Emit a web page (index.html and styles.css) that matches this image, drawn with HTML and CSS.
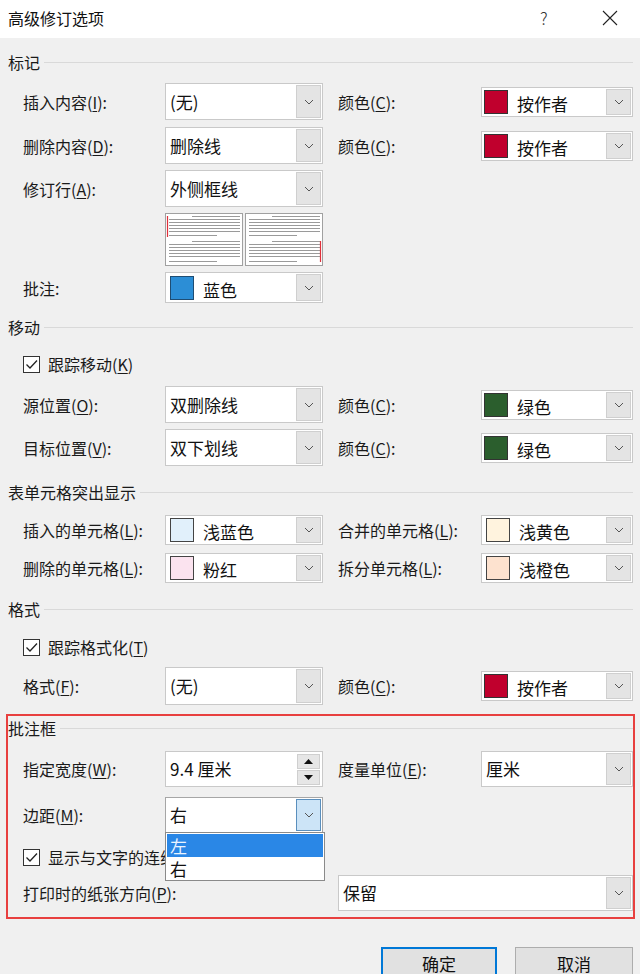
FILE: index.html
```html
<!DOCTYPE html>
<html lang="zh-CN">
<head>
<meta charset="utf-8">
<title>高级修订选项</title>
<link rel="stylesheet" href="styles.css">
</head>
<body>
<div class="dialog">
  <header class="titlebar">
    <span class="title">高级修订选项</span>
    <span class="help">?</span>
    <span class="close">
      <svg width="16" height="16" viewBox="0 0 16 16"><path d="M1 1 L15 15 M15 1 L1 15" stroke="#222" stroke-width="1.1" fill="none"/></svg>
    </span>
  </header>

  <main class="content">
    <!-- 标记 -->
    <section class="group g-mark">
      <div class="group-title"><span>标记</span><i class="rule"></i></div>
      <div class="row h37 mt9">
        <span class="lbl">插入内容(<u>I</u>):</span>
        <div class="combo"><span class="val">(无)</span><span class="btn"><svg width="10" height="6" viewBox="0 0 10 6"><path d="M1 1 L5 5 L9 1" stroke="#555" stroke-width="1" fill="none"/></svg></span></div>
        <span class="lbl">颜色(<u>C</u>):</span>
        <div class="combo c30"><span class="sw red"></span><span class="val">按作者</span><span class="btn"><svg width="10" height="6" viewBox="0 0 10 6"><path d="M1 1 L5 5 L9 1" stroke="#555" stroke-width="1" fill="none"/></svg></span></div>
      </div>
      <div class="row h37 mt7">
        <span class="lbl">删除内容(<u>D</u>):</span>
        <div class="combo"><span class="val">删除线</span><span class="btn"><svg width="10" height="6" viewBox="0 0 10 6"><path d="M1 1 L5 5 L9 1" stroke="#555" stroke-width="1" fill="none"/></svg></span></div>
        <span class="lbl">颜色(<u>C</u>):</span>
        <div class="combo c30"><span class="sw red"></span><span class="val">按作者</span><span class="btn"><svg width="10" height="6" viewBox="0 0 10 6"><path d="M1 1 L5 5 L9 1" stroke="#555" stroke-width="1" fill="none"/></svg></span></div>
      </div>
      <div class="row h37 mt6">
        <span class="lbl">修订行(<u>A</u>):</span>
        <div class="combo"><span class="val">外侧框线</span><span class="btn"><svg width="10" height="6" viewBox="0 0 10 6"><path d="M1 1 L5 5 L9 1" stroke="#555" stroke-width="1" fill="none"/></svg></span></div>
      </div>
      <div class="row h53 mt6">
        <span class="lbl"></span>
        <div class="preview">
          <svg width="158" height="53" viewBox="0 0 158 53">
            <rect x="0.5" y="0.5" width="77" height="52" fill="#fff" stroke="#a0a0a0"/>
            <rect x="80.5" y="0.5" width="77" height="52" fill="#fff" stroke="#a0a0a0"/>
            <g stroke="#9a9a9a" stroke-width="1">
              <path d="M27 3.5 H75 M4 6.5 H75 M4 9.5 H75 M4 12.5 H75 M4 15.5 H75 M4 18.5 H75 M4 22.5 H52"/>
              <path d="M27 28.5 H75 M4 31.5 H75 M4 34.5 H75 M4 37.5 H75 M4 40.5 H75 M4 43.5 H75 M4 48.5 H52"/>
              <path d="M107 3.5 H155 M84 6.5 H155 M84 9.5 H155 M84 12.5 H155 M84 15.5 H155 M84 18.5 H155 M84 22.5 H132"/>
              <path d="M107 28.5 H155 M84 31.5 H155 M84 34.5 H155 M84 37.5 H155 M84 40.5 H155 M84 43.5 H155 M84 48.5 H132"/>
            </g>
            <path d="M2.5 3 V24" stroke="#e0303a" stroke-width="1.2"/>
            <path d="M155.5 28 V49" stroke="#e0303a" stroke-width="1.2"/>
          </svg>
        </div>
      </div>
      <div class="row h31 mt6">
        <span class="lbl">批注:</span>
        <div class="combo"><span class="sw blue"></span><span class="val">蓝色</span><span class="btn"><svg width="10" height="6" viewBox="0 0 10 6"><path d="M1 1 L5 5 L9 1" stroke="#555" stroke-width="1" fill="none"/></svg></span></div>
      </div>
    </section>

    <!-- 移动 -->
    <section class="group g-move">
      <div class="group-title"><span>移动</span><i class="rule"></i></div>
      <div class="check-row mt13">
        <span class="cb"><svg width="13" height="11" viewBox="0 0 13 11"><path d="M1.5 5.5 L5 9 L12 1.5" stroke="#222" stroke-width="1.3" fill="none"/></svg></span>
        <span class="cb-text">跟踪移动(<u>K</u>)</span>
      </div>
      <div class="row h37 mt10">
        <span class="lbl">源位置(<u>O</u>):</span>
        <div class="combo"><span class="val">双删除线</span><span class="btn"><svg width="10" height="6" viewBox="0 0 10 6"><path d="M1 1 L5 5 L9 1" stroke="#555" stroke-width="1" fill="none"/></svg></span></div>
        <span class="lbl">颜色(<u>C</u>):</span>
        <div class="combo c30"><span class="sw green"></span><span class="val">绿色</span><span class="btn"><svg width="10" height="6" viewBox="0 0 10 6"><path d="M1 1 L5 5 L9 1" stroke="#555" stroke-width="1" fill="none"/></svg></span></div>
      </div>
      <div class="row h37 mt6">
        <span class="lbl">目标位置(<u>V</u>):</span>
        <div class="combo"><span class="val">双下划线</span><span class="btn"><svg width="10" height="6" viewBox="0 0 10 6"><path d="M1 1 L5 5 L9 1" stroke="#555" stroke-width="1" fill="none"/></svg></span></div>
        <span class="lbl">颜色(<u>C</u>):</span>
        <div class="combo c30"><span class="sw green"></span><span class="val">绿色</span><span class="btn"><svg width="10" height="6" viewBox="0 0 10 6"><path d="M1 1 L5 5 L9 1" stroke="#555" stroke-width="1" fill="none"/></svg></span></div>
      </div>
    </section>

    <!-- 表单元格突出显示 -->
    <section class="group g-table">
      <div class="group-title"><span>表单元格突出显示</span><i class="rule"></i></div>
      <div class="row h30 mt11">
        <span class="lbl">插入的单元格(<u>L</u>):</span>
        <div class="combo"><span class="sw ltblue"></span><span class="val">浅蓝色</span><span class="btn"><svg width="10" height="6" viewBox="0 0 10 6"><path d="M1 1 L5 5 L9 1" stroke="#555" stroke-width="1" fill="none"/></svg></span></div>
        <span class="lbl">合并的单元格(<u>L</u>):</span>
        <div class="combo"><span class="sw ltyellow"></span><span class="val">浅黄色</span><span class="btn"><svg width="10" height="6" viewBox="0 0 10 6"><path d="M1 1 L5 5 L9 1" stroke="#555" stroke-width="1" fill="none"/></svg></span></div>
      </div>
      <div class="row h30 mt8">
        <span class="lbl">删除的单元格(<u>L</u>):</span>
        <div class="combo"><span class="sw pink"></span><span class="val">粉红</span><span class="btn"><svg width="10" height="6" viewBox="0 0 10 6"><path d="M1 1 L5 5 L9 1" stroke="#555" stroke-width="1" fill="none"/></svg></span></div>
        <span class="lbl">拆分单元格(<u>L</u>):</span>
        <div class="combo"><span class="sw ltorange"></span><span class="val">浅橙色</span><span class="btn"><svg width="10" height="6" viewBox="0 0 10 6"><path d="M1 1 L5 5 L9 1" stroke="#555" stroke-width="1" fill="none"/></svg></span></div>
      </div>
    </section>

    <!-- 格式 -->
    <section class="group g-format">
      <div class="group-title"><span>格式</span><i class="rule"></i></div>
      <div class="check-row mt14">
        <span class="cb"><svg width="13" height="11" viewBox="0 0 13 11"><path d="M1.5 5.5 L5 9 L12 1.5" stroke="#222" stroke-width="1.3" fill="none"/></svg></span>
        <span class="cb-text">跟踪格式化(<u>T</u>)</span>
      </div>
      <div class="row h38 mt8">
        <span class="lbl">格式(<u>F</u>):</span>
        <div class="combo"><span class="val">(无)</span><span class="btn"><svg width="10" height="6" viewBox="0 0 10 6"><path d="M1 1 L5 5 L9 1" stroke="#555" stroke-width="1" fill="none"/></svg></span></div>
        <span class="lbl">颜色(<u>C</u>):</span>
        <div class="combo c30"><span class="sw red"></span><span class="val">按作者</span><span class="btn"><svg width="10" height="6" viewBox="0 0 10 6"><path d="M1 1 L5 5 L9 1" stroke="#555" stroke-width="1" fill="none"/></svg></span></div>
      </div>
    </section>

    <!-- 批注框 -->
    <section class="group g-balloon">
      <div class="group-title"><span>批注框</span><i class="rule"></i></div>
      <div class="row h36 mt11">
        <span class="lbl">指定宽度(<u>W</u>):</span>
        <div class="combo spin"><span class="val">9.4 厘米</span>
          <span class="spin-btns">
            <span class="sbtn"><svg width="9" height="5" viewBox="0 0 9 5"><path d="M0 5 L4.5 0 L9 5 Z" fill="#111"/></svg></span>
            <span class="sbtn"><svg width="9" height="5" viewBox="0 0 9 5"><path d="M0 0 L4.5 5 L9 0 Z" fill="#111"/></svg></span>
          </span>
        </div>
        <span class="lbl">度量单位(<u>E</u>):</span>
        <div class="combo"><span class="val">厘米</span><span class="btn"><svg width="10" height="6" viewBox="0 0 10 6"><path d="M1 1 L5 5 L9 1" stroke="#555" stroke-width="1" fill="none"/></svg></span></div>
      </div>
      <div class="row h36 mt10">
        <span class="lbl">边距(<u>M</u>):</span>
        <div class="combo open"><span class="val">右</span><span class="btn"><svg width="10" height="6" viewBox="0 0 10 6"><path d="M1 1 L5 5 L9 1" stroke="#555" stroke-width="1" fill="none"/></svg></span>
          <ul class="dropdown">
            <li class="sel">左</li>
            <li>右</li>
          </ul>
        </div>
      </div>
      <div class="check-row mt12">
        <span class="cb"><svg width="13" height="11" viewBox="0 0 13 11"><path d="M1.5 5.5 L5 9 L12 1.5" stroke="#222" stroke-width="1.3" fill="none"/></svg></span>
        <span class="cb-text clipped">显示与文字的连线(<u>S</u>)</span>
      </div>
      <div class="row h36 mt6">
        <span class="lbl span2">打印时的纸张方向(<u>P</u>):</span>
        <div class="combo span2"><span class="val">保留</span><span class="btn"><svg width="10" height="6" viewBox="0 0 10 6"><path d="M1 1 L5 5 L9 1" stroke="#555" stroke-width="1" fill="none"/></svg></span></div>
      </div>
    </section>

    <footer class="buttons">
      <button class="pbtn default">确定</button>
      <button class="pbtn">取消</button>
    </footer>
  </main>
</div>
</body>
</html>
```

FILE: styles.css
```css
* { box-sizing: border-box; }

html, body {
  margin: 0;
  padding: 0;
  background: #f0f0f0;
}

body {
  font-family: "Noto Sans CJK SC", "Noto Sans", sans-serif;
  font-size: 16px;
  color: #1a1a1a;
  width: 640px;
  height: 974px;
  overflow: hidden;
}

.dialog {
  width: 640px;
}

/* title bar */
.titlebar {
  height: 38px;
  background: #fff;
  display: flex;
  align-items: center;
  padding: 0 0 0 8px;
}
.title {
  font-size: 16px;
  line-height: 20px;
  color: #111;
  flex: 1;
  margin-top: -3px;
}
.help {
  font-size: 17px;
  color: #333;
  width: 20px;
  margin-right: 42px;
  margin-top: -3px;
  font-weight: 300;
}
.close {
  width: 16px;
  height: 16px;
  margin-right: 22px;
  margin-top: -3px;
  display: flex;
}

.content {
  padding-top: 12px;
}

/* groups */
.group {
  margin: 0 7px 0 8px;
}
.group-title {
  display: flex;
  align-items: center;
  height: 24px;
  line-height: 24px;
}
.group-title span {
  flex: none;
  margin-right: 4px;
}
.group-title .rule {
  flex: 1;
  height: 1px;
  background: #d9d9d9;
  margin-top: 1px;
}

.g-move { margin-top: 12px; }
.g-table { margin-top: 14px; }
.g-format { margin-top: 14px; }
.g-balloon {
  margin-top: 11px;
  outline: 2px solid #e8403f;
  outline-offset: 0;
  padding-bottom: 6px;
}

/* rows */
.row {
  display: grid;
  grid-template-columns: 127px 158px 128px 152px;
  column-gap: 15px;
  align-items: center;
  margin-left: 15px;
}
.h37 { height: 37px; }
.h38 { height: 38px; }
.h36 { height: 36px; }
.h31 { height: 31px; }
.h30 { height: 30px; }
.h53 { height: 53px; }

.mt6 { margin-top: 6px; }
.mt7 { margin-top: 7px; }
.mt8 { margin-top: 8px; }
.mt9 { margin-top: 9px; }
.mt10 { margin-top: 10px; }
.mt11 { margin-top: 11px; }
.mt12 { margin-top: 12px; }
.mt13 { margin-top: 13px; }
.mt14 { margin-top: 14px; }

.lbl {
  white-space: nowrap;
  line-height: 20px;
  color: #1a1a1a;
}
.lbl u, .cb-text u {
  text-decoration: underline;
  text-underline-offset: 2px;
}
.span2 { grid-column: span 2; }

/* combobox */
.combo {
  position: relative;
  height: 100%;
  background: #fff;
  border: 1px solid #c9c9c9;
  display: flex;
  align-items: center;
  padding-left: 4px;
}
.combo.c30 { height: 30px; padding-left: 2px; }
.combo .val {
  flex: 1;
  font-size: 17px;
  line-height: 22px;
  white-space: nowrap;
  color: #111;
}
.combo .btn {
  width: 25px;
  align-self: stretch;
  margin: 1px;
  background: #e4e4e4;
  border: 1px solid #cfcfcf;
  display: flex;
  align-items: center;
  justify-content: center;
}
.combo .sw + .val { margin-left: 9px; margin-top: 4px; }

.sw {
  width: 24px;
  height: 24px;
  border: 1px solid #333;
  flex: none;
}
.g-table .sw { width: 24px; height: 24px; border-color: #444; }
.red { background: #c0002d; }
.blue { background: #2c8ed6; border-color: #1f4d73; }
.green { background: #2b5e2d; }
.ltblue { background: #e1f0fb; }
.ltyellow { background: #fff3de; }
.pink { background: #fbe3ef; }
.ltorange { background: #fde2cf; }

/* preview */
.preview {
  height: 53px;
  display: flex;
}

/* checkbox rows */
.check-row {
  display: flex;
  align-items: center;
  height: 24px;
  margin-left: 15px;
}
.cb {
  width: 17px;
  height: 17px;
  border: 1px solid #333;
  background: #fff;
  display: flex;
  align-items: center;
  justify-content: center;
  flex: none;
}
.cb-text {
  margin-left: 8px;
  line-height: 20px;
  white-space: nowrap;
}
.cb-text.clipped {
  max-width: 117px;
  overflow: hidden;
}

/* spinner */
.combo.spin { padding-right: 1px; }
.spin-btns {
  display: flex;
  flex-direction: column;
  gap: 1px;
  margin-right: 1px;
  align-self: center;
}
.sbtn {
  width: 23px;
  height: 15px;
  background: #e6e6e6;
  border: 1px solid #cfcfcf;
  display: flex;
  align-items: center;
  justify-content: center;
}

/* open combobox with dropdown */
.combo.open { border-color: #a6a6a6; }
.combo.open .btn {
  background: #cce4f7;
  border-color: #5a8fbd;
}
.dropdown {
  position: absolute;
  left: -1px;
  top: 100%;
  width: 160px;
  margin: 0;
  padding: 1px 1px 0;
  list-style: none;
  background: #fff;
  border: 1px solid #8a8a8a;
  z-index: 5;
}
.dropdown li {
  height: 23px;
  line-height: 23px;
  font-size: 17px;
  padding-left: 3px;
  color: #111;
}
.dropdown li.sel {
  background: #2a87e6;
  color: #eaf4ff;
}

/* buttons */
.buttons {
  display: flex;
  justify-content: flex-end;
  gap: 18px;
  padding-right: 7px;
  margin-top: 30px;
}
.pbtn {
  font-family: "Noto Sans CJK SC", "Noto Sans", sans-serif;
  font-size: 17px;
  height: 34px;
  background: #e1e1e1;
  border: 1px solid #adadad;
  color: #111;
  padding: 0;
  line-height: 30px;
  width: 118px;
}
.pbtn.default {
  width: 116px;
  border: 2px solid #0078d7;
}
```
